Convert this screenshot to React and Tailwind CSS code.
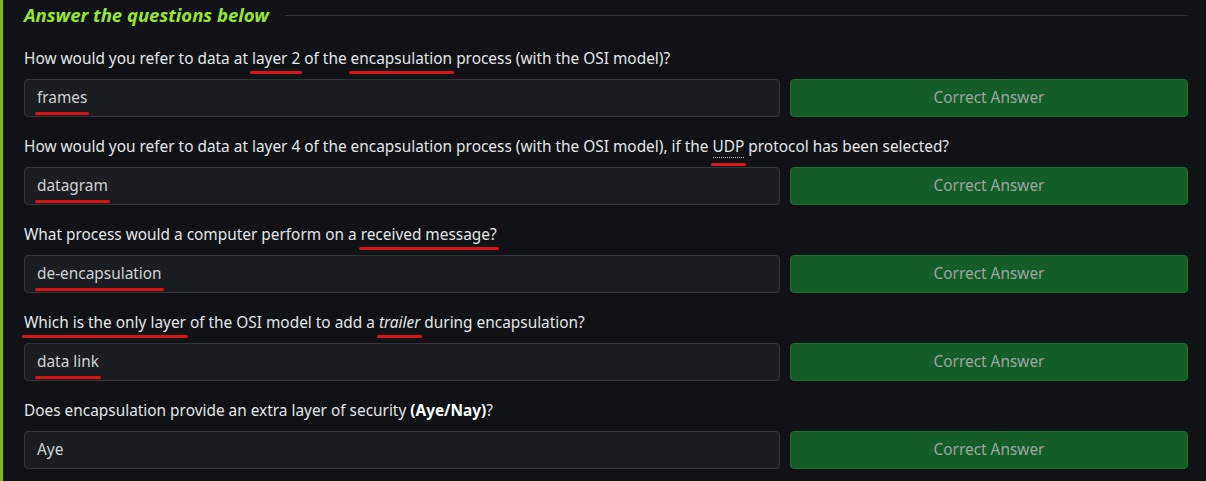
import { Fragment } from "react";

const QUESTIONS = [
  {
    q: [
      "How would you refer to data at ",
      { mark: "layer 2" },
      " of the ",
      { mark: "encapsulation" },
      " process (with the OSI model)?",
    ],
    answer: "frames",
    markAnswer: true,
  },
  {
    q: [
      "How would you refer to data at layer 4 of the encapsulation process (with the OSI model), if the ",
      { mark: "UDP", abbr: true },
      " protocol has been selected?",
    ],
    answer: "datagram",
    markAnswer: true,
  },
  {
    q: ["What process would a computer perform on a ", { mark: "received message?" }],
    answer: "de-encapsulation",
    markAnswer: true,
  },
  {
    q: [
      { mark: "Which is the only layer" },
      " of the OSI model to add a ",
      { mark: "trailer", italic: true },
      " during encapsulation?",
    ],
    answer: "data link",
    markAnswer: true,
  },
  {
    q: ["Does encapsulation provide an extra layer of security ", { bold: "(Aye/Nay)" }, "?"],
    answer: "Aye",
    markAnswer: false,
  },
];

function Marked({ children, className = "", low = false }) {
  return (
    <span className={`relative ${className}`}>
      {children}
      <span
        className={`absolute -left-0.5 -right-0.5 h-[3px] rounded-full bg-[#d9131b] ${
          low ? "-bottom-[9px]" : "-bottom-[5px]"
        }`}
      />
    </span>
  );
}

function Question({ parts }) {
  return (
    <p className="text-[15.4px] leading-5 text-[#e4e6e8]">
      {parts.map((p, i) => {
        if (typeof p === "string") return <Fragment key={i}>{p}</Fragment>;
        if (p.bold) return <b key={i} className="font-bold text-white">{p.bold}</b>;
        return (
          <Marked key={i} className={p.italic ? "italic" : ""} low={p.abbr}>
            {p.abbr ? (
              <span className="border-b border-dotted border-[#c8cacc]">{p.mark}</span>
            ) : (
              p.mark
            )}
          </Marked>
        );
      })}
    </p>
  );
}

export default function App() {
  return (
    <div
      className="w-[1206px] h-[481px] bg-[#101215] border-l-[3px] border-[#7fb814] overflow-hidden"
      style={{ fontFamily: '"Noto Sans", "Open Sans", sans-serif' }}
    >
      <div className="pl-[21px] pr-[18px] pt-[4px]">
        <div className="flex items-center gap-4 h-[22px]">
          <h2 className="text-[18.5px] font-bold italic text-[#9be52b] whitespace-nowrap">
            Answer the questions below
          </h2>
          <div className="flex-1 h-px bg-[#2e3136]" />
        </div>
        <div className="flex flex-col gap-[20px] mt-[23px]">
          {QUESTIONS.map((item, i) => (
            <div key={i} className="flex flex-col gap-[10px]">
              <Question parts={item.q} />
              <div className="flex gap-[10px] h-[38px]">
                <div className="w-[756px] flex items-center px-3 rounded bg-[#1b1e21] border border-[#32363b] text-[15.4px] text-[#cfd2d4]">
                  {item.markAnswer ? <Marked>{item.answer}</Marked> : item.answer}
                </div>
                <button
                  type="button"
                  className="flex-1 rounded bg-[#155d27] border border-[#1f6e33] text-[15.4px] text-[#9ca59e]"
                >
                  Correct Answer
                </button>
              </div>
            </div>
          ))}
        </div>
      </div>
    </div>
  );
}
